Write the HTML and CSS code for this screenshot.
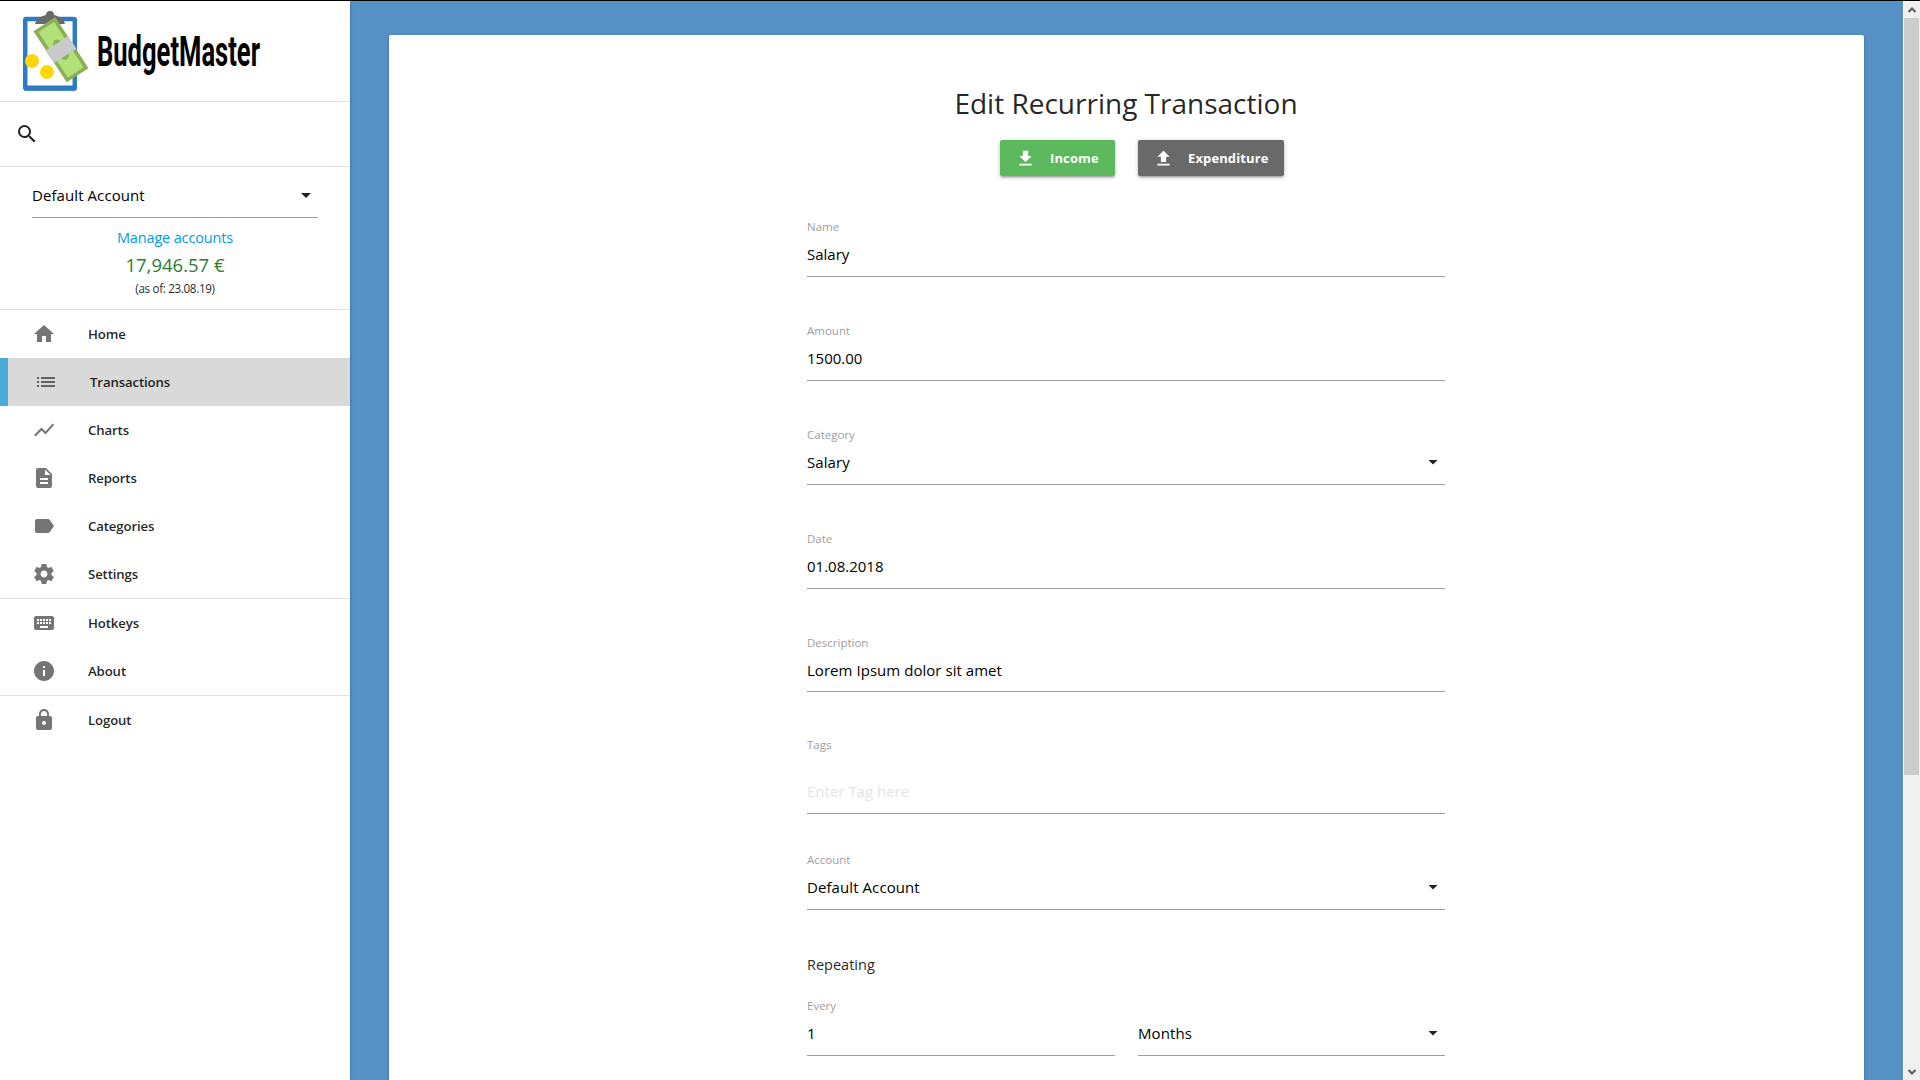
FILE: index.html
```html
<!DOCTYPE html>
<html lang="en">
<head>
<meta charset="utf-8">
<title>BudgetMaster</title>
<link rel="stylesheet" href="styles.css">
</head>
<body>
<div class="app">
  <aside class="sidebar">
    <div class="logo">
      <svg width="350" height="100" viewBox="0 0 350 100">
        <rect x="25.200" y="18" width="49.600" height="69.500" rx="1" fill="#fff" stroke="#2e7bbf" stroke-width="4.500"/>
        <rect x="24" y="84.500" width="52" height="5" fill="#2e7bbf"/>
        <path d="M35 23c1-5 6-8 11-9a4 4 0 0 1 8 0c5 1 10 4 11 9z" fill="#696969"/>
        <g transform="translate(61 48.700) rotate(-33)">
          <rect x="-13" y="-30.500" width="26" height="61" fill="#8bb158"/>
          <rect x="-9.300" y="-27" width="18.600" height="54" fill="#b2e277"/>
          <ellipse rx="6" ry="11.500" fill="#8bb158"/>
          <rect x="-13.500" y="-7.500" width="27" height="15" fill="#cacaca"/>
        </g>
        <circle cx="32" cy="60" r="7" fill="#ffd60a"/>
        <circle cx="47" cy="71" r="7" fill="#ffd60a"/>
        <text class="wordmark" x="97" y="65" textLength="163" lengthAdjust="spacingAndGlyphs">BudgetMaster</text>
      </svg>
    </div>
    <div class="search">
      <svg class="icon-search" viewBox="0 0 24 24"><path d="M15.500 14h-.79l-.28-.27A6.471 6.471 0 0 0 16 9.500 6.500 6.500 0 1 0 9.500 16c1.610 0 3.090-.59 4.230-1.570l.27.28v.79l5 4.990L20.490 19l-4.990-5zm-6 0C7.010 14 5 11.990 5 9.500S7.010 5 9.500 5 14 7.010 14 9.500 11.990 14 9.500 14z"/></svg>
    </div>
    <div class="account">
      <div class="select account-select"><span>Default Account</span><i class="caret"></i></div>
      <a class="manage">Manage accounts</a>
      <div class="balance">17,946.57 €</div>
      <div class="as-of">(as of: 23.08.19)</div>
    </div>
    <nav>
      <div class="group">
        <a class="item"><svg viewBox="0 0 24 24"><path d="M10 20v-6h4v6h5v-8h3L12 3 2 12h3v8z"/></svg>Home</a>
        <a class="item active"><svg viewBox="0 0 24 24"><path d="M3 13h2v-2H3v2zm0 4h2v-2H3v2zm0-8h2V7H3v2zm4 4h14v-2H7v2zm0 4h14v-2H7v2zM7 7v2h14V7H7z"/></svg>Transactions</a>
        <a class="item"><svg viewBox="0 0 24 24"><path d="M3.500 18.490l6-6.010 4 4L22 6.920l-1.410-1.410-7.090 7.970-4-4L2 16.990z"/></svg>Charts</a>
        <a class="item"><svg viewBox="0 0 24 24"><path d="M14 2H6c-1.100 0-1.990.9-1.990 2L4 20c0 1.100.89 2 1.990 2H18c1.100 0 2-.9 2-2V8l-6-6zm2 16H8v-2h8v2zm0-4H8v-2h8v2zm-3-5V3.500L18.500 9H13z"/></svg>Reports</a>
        <a class="item"><svg viewBox="0 0 24 24"><path d="M17.630 5.840C17.270 5.330 16.670 5 16 5L5 5.010C3.900 5.010 3 5.900 3 7v10c0 1.100.9 1.990 2 1.990L16 19c.67 0 1.270-.33 1.630-.84L22 12l-4.370-6.160z"/></svg>Categories</a>
        <a class="item"><svg viewBox="0 0 24 24"><path d="M19.430 12.980c.04-.32.07-.64.07-.98s-.03-.66-.07-.98l2.110-1.650c.19-.15.24-.42.12-.64l-2-3.460c-.12-.22-.39-.3-.61-.22l-2.490 1c-.52-.4-1.080-.73-1.690-.98l-.38-2.650A.488.488 0 0 0 14 2h-4c-.25 0-.46.18-.49.42l-.38 2.650c-.61.25-1.170.59-1.690.98l-2.490-1c-.23-.09-.49 0-.61.22l-2 3.460c-.13.22-.07.49.12.64l2.110 1.650c-.04.32-.07.65-.07.98s.03.66.07.98l-2.110 1.650c-.19.15-.24.42-.12.64l2 3.460c.12.22.39.3.61.22l2.490-1c.52.4 1.080.73 1.690.98l.38 2.650c.03.24.24.42.49.42h4c.25 0 .46-.18.49-.42l.38-2.650c.61-.25 1.170-.59 1.690-.98l2.490 1c.23.09.49 0 .61-.22l2-3.460c.12-.22.07-.49-.12-.64l-2.110-1.650zM12 15.500c-1.930 0-3.500-1.570-3.500-3.500s1.570-3.500 3.500-3.500 3.500 1.570 3.500 3.500-1.570 3.500-3.500 3.500z"/></svg>Settings</a>
      </div>
      <div class="group">
        <a class="item"><svg viewBox="0 0 24 24"><path d="M20 5H4c-1.100 0-1.990.9-1.990 2L2 17c0 1.100.9 2 2 2h16c1.100 0 2-.9 2-2V7c0-1.100-.9-2-2-2zm-9 3h2v2h-2V8zm0 3h2v2h-2v-2zM8 8h2v2H8V8zm0 3h2v2H8v-2zm-1 2H5v-2h2v2zm0-3H5V8h2v2zm9 7H8v-2h8v2zm0-4h-2v-2h2v2zm0-3h-2V8h2v2zm3 3h-2v-2h2v2zm0-3h-2V8h2v2z"/></svg>Hotkeys</a>
        <a class="item"><svg viewBox="0 0 24 24"><path d="M12 2C6.480 2 2 6.480 2 12s4.480 10 10 10 10-4.480 10-10S17.520 2 12 2zm1 15h-2v-6h2v6zm0-8h-2V7h2v2z"/></svg>About</a>
      </div>
      <div class="group">
        <a class="item"><svg viewBox="0 0 24 24"><path d="M18 8h-1V6c0-2.760-2.240-5-5-5S7 3.240 7 6v2H6c-1.100 0-2 .9-2 2v10c0 1.100.9 2 2 2h12c1.100 0 2-.9 2-2V10c0-1.100-.9-2-2-2zm-6 9c-1.100 0-2-.9-2-2s.9-2 2-2 2 .9 2 2-.9 2-2 2zm3.100-9H8.900V6c0-1.710 1.390-3.100 3.100-3.100 1.710 0 3.100 1.390 3.100 3.100v2z"/></svg>Logout</a>
      </div>
    </nav>
  </aside>

  <main class="content">
    <section class="card">
      <h1>Edit Recurring Transaction</h1>
      <div class="buttons">
        <a class="btn income"><svg viewBox="0 0 24 24"><path d="M19 9h-4V3H9v6H5l7 7 7-7zM5 18v2h14v-2H5z"/></svg><span>Income</span></a>
        <a class="btn expenditure"><svg viewBox="0 0 24 24"><path d="M9 16h6v-6h4l-7-7-7 7h4zm-4 2h14v2H5z"/></svg><span>Expenditure</span></a>
      </div>
      <form class="form">
        <div class="field"><label>Name</label><div class="value">Salary</div></div>
        <div class="field"><label>Amount</label><div class="value">1500.00</div></div>
        <div class="field"><label>Category</label><div class="value select"><span>Salary</span><i class="caret"></i></div></div>
        <div class="field"><label>Date</label><div class="value">01.08.2018</div></div>
        <div class="field description"><label>Description</label><div class="value">Lorem Ipsum dolor sit amet</div></div>
        <div class="field tags"><label>Tags</label><div class="value placeholder">Enter Tag here</div></div>
        <div class="field account-field"><label>Account</label><div class="value select"><span>Default Account</span><i class="caret"></i></div></div>
        <div class="repeating">Repeating</div>
        <div class="halves">
          <div class="field"><label>Every</label><div class="value">1</div></div>
          <div class="field"><div class="value select"><span>Months</span><i class="caret"></i></div></div>
        </div>
      </form>
    </section>
  </main>

  <div class="scrollbar">
    <svg class="arrow" viewBox="0 0 16 17"><path d="M4.500 11L8 7.500l3.500 3.500"/></svg>
    <div class="thumb"></div>
    <svg class="arrow down" viewBox="0 0 16 17"><path d="M4.500 7L8 10.500 11.500 7"/></svg>
  </div>
</div>
</body>
</html>
```

FILE: styles.css
```css
* { box-sizing: border-box; }

body {
  margin: 0;
  overflow: hidden;
  font-family: "Open Sans", "Noto Sans", sans-serif;
  font-size: 15px;
  line-height: 24px;
  color: rgba(0, 0, 0, 0.87);
}

.app {
  display: flex;
  height: 1080px;
  border-top: 1px solid #000;
  background: #5792c7;
}

/* Sidebar */
.sidebar {
  flex: none;
  width: 350px;
  background: #fff;
  box-shadow: 0 2px 2px rgba(0, 0, 0, .14), 0 3px 1px -2px rgba(0, 0, 0, .12), 0 1px 5px rgba(0, 0, 0, .2);
}
.logo { height: 101px; border-bottom: 1px solid #e0e0e0; }
.logo svg { display: block; overflow: visible; }
.wordmark { font: bold 43px Roboto, sans-serif; fill: #000; }
.search {
  display: flex;
  align-items: center;
  height: 65px;
  padding-left: 15px;
  border-bottom: 1px solid #e0e0e0;
}
.icon-search { width: 24px; height: 24px; fill: #212121; }

.account {
  height: 143px;
  padding: 16px 32px 0;
  border-bottom: 1px solid #e0e0e0;
  text-align: center;
}
.select { display: flex; justify-content: space-between; align-items: center; }
.select span { letter-spacing: .08px; }
.account-select {
  height: 35px;
  padding-bottom: 10px;
  border-bottom: 1px solid #9e9e9e;
  color: #000;
}
.caret {
  width: 10px;
  height: 5px;
  margin-right: 7px;
  background: #212121;
  clip-path: polygon(0 0, 100% 0, 50% 100%);
}
.account-select .caret { margin-top: 1px; }
.manage { display: block; margin-top: 8px; font-size: 14.500px; letter-spacing: -.15px; color: #039be5; }
.balance { height: 29px; font-size: 18.500px; line-height: 29px; color: #2e7d32; }
.as-of { font-size: 11.700px; line-height: 18px; letter-spacing: -.35px; }

.group + .group { border-top: 1px solid #e0e0e0; }
.item {
  display: flex;
  align-items: center;
  gap: 32px;
  height: 48px;
  padding-left: 32px;
  font-size: 13.200px;
  font-weight: 600;
  letter-spacing: -.12px;
}
.item svg { width: 24px; height: 24px; fill: #757575; }
.active { padding-left: 26px; border-left: 8px solid #4cabd6; background: #d9d9d9; }
.active svg { fill: #616161; }

/* Content */
.content { flex: 1; padding: 34px 39px 0; }
.card {
  height: 1080px;
  padding: 48px 1px 0 0;
  border-radius: 2px;
  background: #fff;
  box-shadow: 0 2px 2px rgba(0, 0, 0, .14), 0 3px 1px -2px rgba(0, 0, 0, .12), 0 1px 5px rgba(0, 0, 0, .2);
}
h1 { margin: 0; font-size: 28px; font-weight: 400; line-height: 40px; text-align: center; }

.buttons, .halves { display: grid; grid-template-columns: 308px 307px; column-gap: 23px; }
.buttons, .form { width: 638px; margin: 0 auto; }
.buttons { margin-top: 17px; }
.btn {
  display: flex;
  align-items: center;
  gap: 14px;
  height: 36px;
  padding-left: 15px;
  border-radius: 2px;
  color: #fff;
  font-size: 13px;
  font-weight: 700;
  letter-spacing: .12px;
  box-shadow: 0 2px 2px rgba(0, 0, 0, .14), 0 3px 1px -2px rgba(0, 0, 0, .12), 0 1px 5px rgba(0, 0, 0, .2);
}
.btn svg { width: 21px; height: 21px; fill: #fff; }
.income { justify-self: end; width: 115px; background: #5cb85c; }
.expenditure { width: 146px; background: #696969; }

.form { padding-top: 41px; }
.field { display: flex; flex-direction: column; margin-bottom: 44px; }
.field label { height: 20px; font-size: 11.500px; line-height: 20px; color: #9e9e9e; }
.value { height: 40px; padding: 5px 0 10px; border-bottom: 1px solid #9e9e9e; color: #000; }
.description { margin-bottom: 43px; }
.description .value { height: 39px; letter-spacing: .04px; }
.tags { margin-bottom: 36px; }
.tags .value { height: 59px; padding-top: 24px; }
.placeholder { color: #e4e4e4; }
.account-field { margin-bottom: 43px; }
.repeating { margin-bottom: 19px; font-size: 14.500px; }
.halves .field { justify-content: flex-end; }

/* Scrollbar */
.scrollbar {
  display: flex;
  flex-direction: column;
  width: 17px;
  background: #f0f0f0;
  border-left: 1px solid #fff;
}
.arrow { flex: none; width: 16px; height: 17px; fill: none; stroke: #606060; stroke-width: 2.200; }
.thumb { width: 15px; height: 757px; background: #cdcdcd; }
.down { margin-top: auto; }
```
